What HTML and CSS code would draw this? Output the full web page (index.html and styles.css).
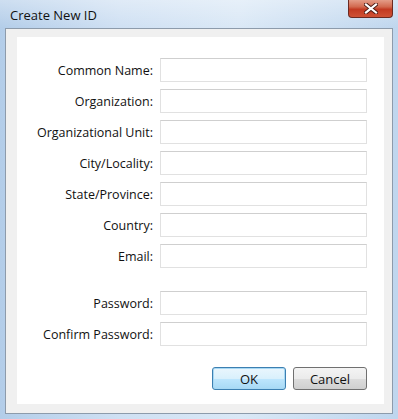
FILE: index.html
```html
<!DOCTYPE html>
<html>
<head>
<meta charset="utf-8">
<link rel="stylesheet" href="styles.css">
</head>
<body>
<div class="window">
  <div class="titlebar">
    <span class="title">Create New ID</span>
    <div class="close">
      <svg width="14" height="11" viewBox="0 0 14 11">
        <path d="M2 1.5 L12 9.5 M12 1.5 L2 9.5" stroke="#4a1a14" stroke-width="4" stroke-linecap="square"/>
        <path d="M2 1.5 L12 9.5 M12 1.5 L2 9.5" stroke="#ffffff" stroke-width="2.2" stroke-linecap="square"/>
      </svg>
    </div>
  </div>
  <div class="client">
    <div class="panel">
      <div class="form">
        <label class="lbl">Common Name:</label><div class="field"></div>
        <label class="lbl">Organization:</label><div class="field"></div>
        <label class="lbl">Organizational Unit:</label><div class="field"></div>
        <label class="lbl">City/Locality:</label><div class="field"></div>
        <label class="lbl">State/Province:</label><div class="field"></div>
        <label class="lbl">Country:</label><div class="field"></div>
        <label class="lbl">Email:</label><div class="field"></div>
        <div class="spacer"></div>
        <label class="lbl">Password:</label><div class="field"></div>
        <label class="lbl">Confirm Password:</label><div class="field"></div>
      </div>
      <div class="buttons">
        <button class="btn btn-ok">OK</button>
        <button class="btn">Cancel</button>
      </div>
    </div>
  </div>
</div>
</body>
</html>
```

FILE: styles.css
```css
html, body {
  margin: 0;
  padding: 0;
}
body {
  width: 398px;
  height: 419px;
  overflow: hidden;
  font-family: "Open Sans", "Noto Sans", sans-serif;
  font-size: 12.5px;
  color: #000;
}
.window {
  width: 398px;
  height: 419px;
  box-sizing: border-box;
  background: linear-gradient(90deg, #b3cde9 0%, #cfe0f3 30%, #dae8f6 60%, #bfd6ee 100%);
  display: flex;
  flex-direction: column;
}
.titlebar {
  height: 28px;
  display: flex;
  justify-content: space-between;
  align-items: flex-start;
  background: linear-gradient(180deg, rgba(255,255,255,0.35), rgba(255,255,255,0));
}
.title {
  margin-left: 10px;
  margin-top: 6px;
  font-size: 13px;
  color: #111;
}
.close {
  width: 45px;
  height: 18px;
  margin-right: 5px;
  box-sizing: border-box;
  border: 1px solid #6b2a22;
  border-top: none;
  border-radius: 0 0 4px 4px;
  background: linear-gradient(180deg, #e49c88 0%, #d2694f 40%, #c23a22 55%, #cf5236 100%);
  display: flex;
  align-items: center;
  justify-content: center;
}
.client {
  flex: 1;
  margin: 0 5px 5px 5px;
  border: 1px solid #8d9bab;
  background: #f0f0f0;
  padding: 8px 9px 9px 11px;
  display: flex;
}
.panel {
  flex: 1;
  background: #ffffff;
  padding: 21px 17px 0 0;
  display: flex;
  flex-direction: column;
}
.form {
  display: grid;
  grid-template-columns: 136px 207px;
  column-gap: 7px;
  row-gap: 7px;
  align-items: center;
}
.lbl {
  text-align: right;
  white-space: nowrap;
  color: #111;
}
.field {
  height: 24px;
  box-sizing: border-box;
  border: 1px solid #e1e1e1;
  border-top-color: #cfcfcf;
  background: #fff;
}
.spacer {
  grid-column: 1 / 3;
  height: 9px;
}
.buttons {
  display: flex;
  justify-content: flex-end;
  gap: 7px;
  margin-top: 21px;
}
.btn {
  width: 74px;
  height: 23px;
  font-family: inherit;
  font-size: 13px;
  color: #111;
  border: 1px solid #707070;
  border-radius: 3px;
  background: linear-gradient(180deg, #f4f4f4 0%, #ebebeb 50%, #dddddd 51%, #cfcfcf 100%);
  padding: 0;
}
.btn-ok {
  border-color: #3c7fb1;
  box-shadow: inset 0 0 0 1px #a7d8f4;
  background: linear-gradient(180deg, #eaf6fd 0%, #d9f0fc 50%, #bee6fd 51%, #a7d9f5 100%);
}
```
